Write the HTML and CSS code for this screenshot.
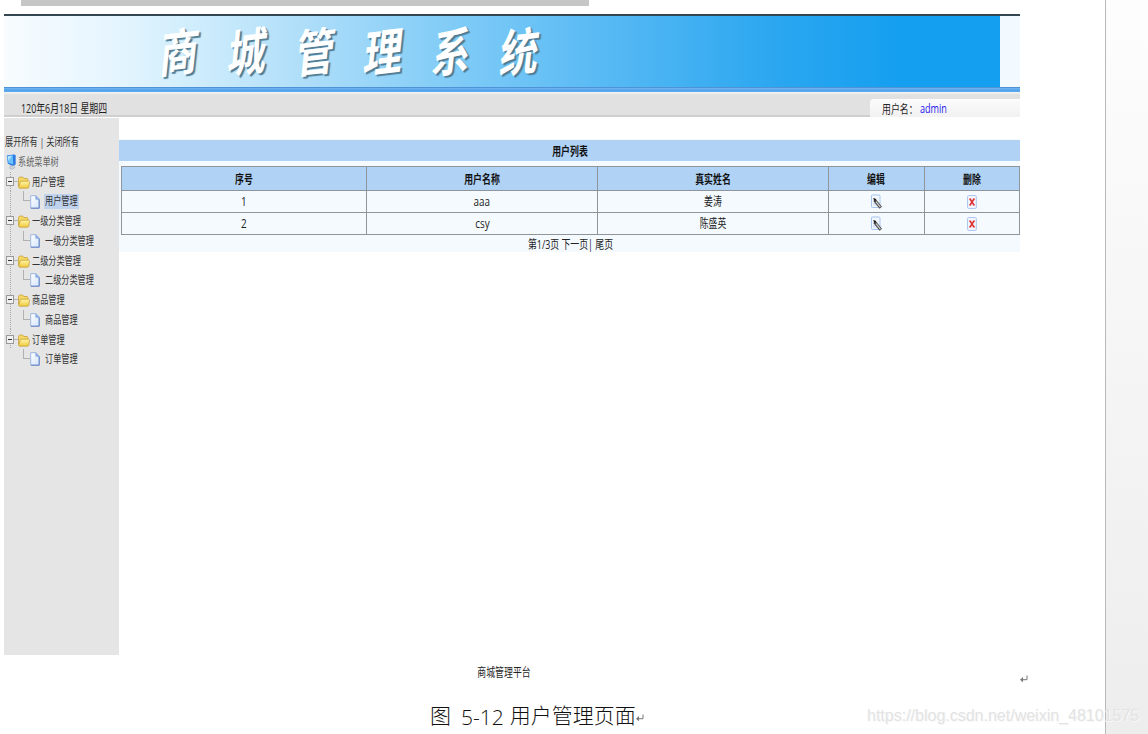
FILE: index.html
```html
<!DOCTYPE html>
<html lang="zh-CN">
<head>
    <meta charset="UTF-8">
    <title>商城管理系统</title>
    <link rel="stylesheet" href="styles.css">
</head>
<body>
    <!-- 图标 -->
    <svg class="defs" width="0" height="0">
        <defs>
            <linearGradient id="gFolder" x1="0" y1="0" x2="0" y2="1">
                <stop offset="0" stop-color="#fff6a8"/>
                <stop offset="1" stop-color="#f0c83c"/>
            </linearGradient>
            <linearGradient id="gDoc" x1="0" y1="0" x2="1" y2="1">
                <stop offset="0" stop-color="#ffffff"/>
                <stop offset="1" stop-color="#d3e5fc"/>
            </linearGradient>
            <symbol id="folder" viewBox="0 0 12 13">
                <path d="M.5 10.5V2.2L1.7 1h3l1.2 1.5h3.4l.6.8v2" fill="#f5d861" stroke="#c29a33" stroke-width=".7"/>
                <path d="M.6 11.2L2.5 5.2h8.2l.8.7-.8 5.6-.8.7H1.4z" fill="url(#gFolder)" stroke="#c29a33" stroke-width=".7"/>
            </symbol>
            <symbol id="doc" viewBox="0 0 10 14">
                <path d="M.7.7h5.2l3.3 3.5v9H.7z" fill="url(#gDoc)" stroke="#8ba8dc" stroke-width=".8"/>
                <path d="M5.9.7v3.5h3.3" fill="#8eb4ef" stroke="#7d9cd6" stroke-width=".7"/>
                <path d="M9.2 4.5v8.7H1" fill="none" stroke="#5c7cc0" stroke-width=".9"/>
            </symbol>
            <symbol id="edit" viewBox="0 0 12 15">
                <rect x="1.5" y="1" width="8.5" height="12.5" rx="1" fill="#f3f8ff" stroke="#a9c3f0"/>
                <path d="M3 9.5h3M3 11h4" stroke="#c3d3ef" stroke-width=".8"/>
                <path d="M4.5 6L10.8 13.8" stroke="#444" stroke-width="3"/>
                <path d="M6 7.6l4.4 5.6" stroke="#d0d0d0" stroke-width="1.3"/>
                <path d="M3.2 4l3.2 1-2.1 2.1z" fill="#111"/>
            </symbol>
            <symbol id="del" viewBox="0 0 10 14">
                <rect x=".6" y=".6" width="8.7" height="12.8" rx="1" fill="#f5f8ff" stroke="#a9c3f0"/>
                <path d="M3 4l4 6M7 4l-4 6" fill="none" stroke="#dd3434" stroke-width="1.6"/>
                <path d="M2 4h2.2M5.9 4h2.2M2 10h2.2M5.9 10h2.2" stroke="#dd3434" stroke-width=".9"/>
            </symbol>
            <symbol id="ret" viewBox="0 0 8 8">
                <path d="M7 .5v4.2H1.5" fill="none" stroke="#777" stroke-width="1"/>
                <path d="M0 4.7l3-2.6v5.2z" fill="#777"/>
            </symbol>
        </defs>
    </svg>

    <div class="sheet">
        <div class="ruler"></div>

        <div class="frame">
            <div class="banner">
                <div class="banner-pic">
                    <h1 class="logo"><span>商</span><span>城</span><span>管</span><span>理</span><span>系</span><span>统</span></h1>
                </div>
            </div>
            <div class="stripe"></div>
            <div class="status">
                <div class="date"><span class="nl">120年6月18日 星期四</span></div>
                <div class="user"><span class="nl">用户名：</span><a class="nl admin">admin</a></div>
            </div>

            <div class="middle">
                <!-- 左侧菜单树 -->
                <div class="side">
                    <div class="switch"><span class="nl">展开所有 | 关闭所有</span></div>
                    <div class="row root">
                        <svg width="11" height="16" viewBox="0 0 11 16">
                            <path d="M.8 1.6L7.6.4 9.6 1v9.6L7 12.4 1.8 9.6z" fill="#2b78e4"/>
                            <path d="M1.4 2.2l5.4-.9.4 9.2-4.9-1.8z" fill="#6cc3fb"/>
                            <path d="M1.6 2.4l4.4-.8-3.6 5z" fill="#b9e8ff"/>
                            <path d="M4.2 12l3.4-.6 1.2 2.2-2.6 1.8-2.6-1.2z" fill="#cfd5dd" stroke="#97a1b0" stroke-width=".5"/>
                        </svg>
                        <span class="nl">系统菜单树</span>
                    </div>
                    <div class="row node"><i class="minus"></i><svg class="folder"><use href="#folder"/></svg><span class="nl">用户管理</span></div>
                    <div class="row leaf"><i class="elbow"></i><svg class="doc"><use href="#doc"/></svg><span class="pick"><span class="nl">用户管理</span></span></div>
                    <div class="row node"><i class="minus"></i><svg class="folder"><use href="#folder"/></svg><span class="nl">一级分类管理</span></div>
                    <div class="row leaf"><i class="elbow"></i><svg class="doc"><use href="#doc"/></svg><span class="nl">一级分类管理</span></div>
                    <div class="row node"><i class="minus"></i><svg class="folder"><use href="#folder"/></svg><span class="nl">二级分类管理</span></div>
                    <div class="row leaf"><i class="elbow"></i><svg class="doc"><use href="#doc"/></svg><span class="nl">二级分类管理</span></div>
                    <div class="row node"><i class="minus"></i><svg class="folder"><use href="#folder"/></svg><span class="nl">商品管理</span></div>
                    <div class="row leaf"><i class="elbow"></i><svg class="doc"><use href="#doc"/></svg><span class="nl">商品管理</span></div>
                    <div class="row node"><i class="minus"></i><svg class="folder"><use href="#folder"/></svg><span class="nl">订单管理</span></div>
                    <div class="row leaf last"><i class="elbow"></i><svg class="doc"><use href="#doc"/></svg><span class="nl">订单管理</span></div>
                </div>

                <!-- 用户列表 -->
                <div class="main">
                    <div class="panel">
                        <div class="caption"><span class="nc">用户列表</span></div>
                        <table class="list">
                            <colgroup><col class="c1"><col class="c2"><col class="c2"><col class="c3"><col class="c3"></colgroup>
                            <tr class="head">
                                <th><span class="nc">序号</span></th>
                                <th><span class="nc">用户名称</span></th>
                                <th><span class="nc">真实姓名</span></th>
                                <th><span class="nc">编辑</span></th>
                                <th><span class="nc">删除</span></th>
                            </tr>
                            <tr>
                                <td><span class="nc en">1</span></td>
                                <td><span class="nc en">aaa</span></td>
                                <td><span class="nc">姜涛</span></td>
                                <td><svg class="edit"><use href="#edit"/></svg></td>
                                <td><svg class="del"><use href="#del"/></svg></td>
                            </tr>
                            <tr>
                                <td><span class="nc en">2</span></td>
                                <td><span class="nc en">csy</span></td>
                                <td><span class="nc">陈盛英</span></td>
                                <td><svg class="edit"><use href="#edit"/></svg></td>
                                <td><svg class="del"><use href="#del"/></svg></td>
                            </tr>
                        </table>
                        <div class="pager"><span class="nc">第1/3页 下一页| 尾页</span></div>
                    </div>
                </div>
            </div>
        </div>

        <div class="foot">
            <span class="nc">商城管理平台</span>
            <svg class="ret"><use href="#ret"/></svg>
        </div>
        <div class="figure">
            <span class="fig-a">图</span><span class="fig-n">5-12</span><span class="fig-b">用户管理页面</span><svg class="ret"><use href="#ret"/></svg>
        </div>
    </div>
    <div class="outside"></div>
    <div class="watermark">https://blog.csdn.net/weixin_48101575</div>
</body>
</html>
```
FILE: styles.css
```css
* {
    box-sizing: border-box;
}
body {
    margin: 0;
    width: 1148px;
    height: 734px;
    overflow: hidden;
    display: flex;
    position: relative;
    background: #fff;
    color: #222;
    font: 12px "Open Sans", "Noto Sans CJK SC", sans-serif;
}
svg {
    display: block;
    flex: none;
}
.defs {
    position: absolute;
}
.sheet {
    width: 1105px;
    height: 734px;
}
.outside {
    flex: 1;
    border-left: 1px solid #b9b9b9;
    background: linear-gradient(#fdfdfd, #ededed);
}
.ruler {
    width: 568px;
    height: 6px;
    margin-left: 21px;
    background: #c6c6c6;
}
.frame {
    width: 1016px;
    margin: 8px 0 0 4px;
}

/* 横向压缩的文字 */
.nl, .nc {
    display: inline-block;
    white-space: nowrap;
    transform: scaleX(.74);
}
.nl {
    transform-origin: left center;
}
.en {
    font-size: 13px;
    transform: scaleX(.76);
}

/* 顶部 */
.banner {
    height: 73px;
    border-top: 2px solid #34464f;
    background: #f3faff;
}
.banner-pic {
    width: 996px;
    height: 71px;
    background: linear-gradient(90deg, #f8fcff 0%, #e5f5fe 11%, #cdecfc 20%, #afdef9 30%, #86cef7 43%, #58baf4 60%, #2ca7f0 77%, #159ff0 90%, #149ff1 100%);
}
.logo {
    display: grid;
    grid-template-columns: repeat(6, 68px);
    width: 408px;
    margin: 0 0 0 142px;
    color: #fff;
    font: 700 51px/66px "Noto Sans CJK SC", sans-serif;
    text-align: center;
    text-shadow: 3px 2px 1px #507c94;
}
.logo span {
    transform: scaleX(.76) skew(-8deg, -5deg);
}
.stripe {
    height: 5px;
    background: linear-gradient(#4d93d6 0, #4d93d6 1px, #6cb2f0 1px, #6cb2f0 2px, #4f9fea 3px, #62b0f4 5px);
}
.status {
    height: 25px;
    display: flex;
    justify-content: space-between;
    border-top: 2px solid #efefec;
    border-bottom: 2px solid #cfcfcf;
    background: #e1e1e1;
}
.date {
    padding: 6px 0 0 17px;
    line-height: 17px;
}
.user {
    display: flex;
    width: 150px;
    height: 18px;
    margin-top: 5px;
    padding-left: 12px;
    border-radius: 4px 0 0 0;
    background: linear-gradient(#fcfcfc, #f1f1f1);
    line-height: 21px;
}
.user .nl:first-child {
    width: 38px;
}
.admin {
    color: #2a1af0;
    font-size: 13px;
    line-height: 19px;
    transform: scaleX(.7);
}
.middle {
    display: flex;
    height: 538px;
    padding-top: 1px;
}

/* 菜单树 */
.side {
    width: 115px;
    padding-top: 14px;
    background: #e5e5e5;
    color: #333;
    font-size: 11px;
}
.switch {
    height: 20px;
    padding-left: 1px;
    line-height: 20px;
}
.row {
    display: flex;
    align-items: center;
    height: 19.7px;
    line-height: 19px;
}
.root {
    gap: 1px;
    padding-left: 2px;
    color: #666;
}
.node {
    padding-left: 2px;
    background: repeating-linear-gradient(#aaa 0 1px, transparent 1px 2px) 6px 0 / 1px 100% no-repeat;
}
.node .nl {
    margin-left: 2px;
}
.minus {
    position: relative;
    width: 8px;
    height: 9px;
    margin-right: 4px;
    border: 1px solid #999;
    background: linear-gradient(#333, #333) 1px 3px / 4px 1px no-repeat #f0f0f0;
}
.minus::after {
    content: "";
    position: absolute;
    left: 7px;
    top: 3px;
    width: 4px;
    border-top: 1px solid #b5b5b5;
}
.folder {
    width: 12px;
    height: 13px;
    margin-top: 2px;
}
.leaf {
    padding-left: 19px;
    background: repeating-linear-gradient(#aaa 0 1px, transparent 1px 2px) 6px 0 / 1px 100% no-repeat;
}
.leaf.last {
    background: none;
}
.elbow {
    align-self: flex-start;
    width: 7px;
    height: 10px;
    border-left: 1px solid #b0b0b0;
    border-bottom: 1px solid #b0b0b0;
}
.doc {
    width: 10px;
    height: 14px;
    margin-top: 1px;
}
.leaf > .nl {
    margin-left: 5px;
}
.pick {
    width: 35px;
    height: 15px;
    margin-left: 4px;
    padding-left: 1px;
    background: #bfd2ee;
    line-height: 14px;
}

/* 列表 */
.main {
    width: 901px;
    padding-top: 21px;
}
.panel {
    height: 113px;
    padding-top: 1px;
    background: #f5faff;
}
.caption {
    height: 21px;
    padding-left: 2px;
    background: #afd2f5;
    color: #111;
    font-weight: bold;
    line-height: 24px;
    text-align: center;
}
.list {
    width: 899px;
    margin: 5px 0 0 2px;
    table-layout: fixed;
    border-collapse: collapse;
}
.c1 {
    width: 245px;
}
.c2 {
    width: 231px;
}
.c3 {
    width: 95.5px;
}
.list th, .list td {
    height: 22px;
    padding: 0;
    border: 1px solid #8f959b;
    line-height: 20px;
    text-align: center;
}
.list th {
    height: 24px;
    padding-top: 2px;
    background: #afd2f5;
    color: #111;
}
.list svg {
    margin: 0 auto;
}
.edit {
    width: 12px;
    height: 15px;
}
.del {
    width: 10px;
    height: 14px;
}
.pager {
    padding-left: 1px;
    line-height: 19px;
    text-align: center;
}

/* 页脚 */
.foot {
    display: flex;
    justify-content: space-between;
    width: 1028px;
    height: 36px;
    padding: 9px 0 0 468px;
    line-height: 18px;
}
.ret {
    width: 8px;
    height: 8px;
}
.foot .ret {
    margin-top: 11px;
}
.figure {
    display: flex;
    align-items: center;
    height: 46px;
    padding-left: 430px;
    color: #111;
    font: 300 21px/46px "Noto Sans CJK SC", sans-serif;
}
.fig-n {
    margin: 0 6px 0 10px;
    padding-top: 5px;
    font: 300 21px/46px "Open Sans", sans-serif;
}
.figure .ret {
    margin-top: 8px;
}
.watermark {
    position: absolute;
    left: 867px;
    top: 706px;
    color: #e3e3e3;
    font: 16px/20px "Liberation Sans", sans-serif;
    text-shadow: 1px 1px 0 #f8f8f8;
    white-space: nowrap;
}
```
